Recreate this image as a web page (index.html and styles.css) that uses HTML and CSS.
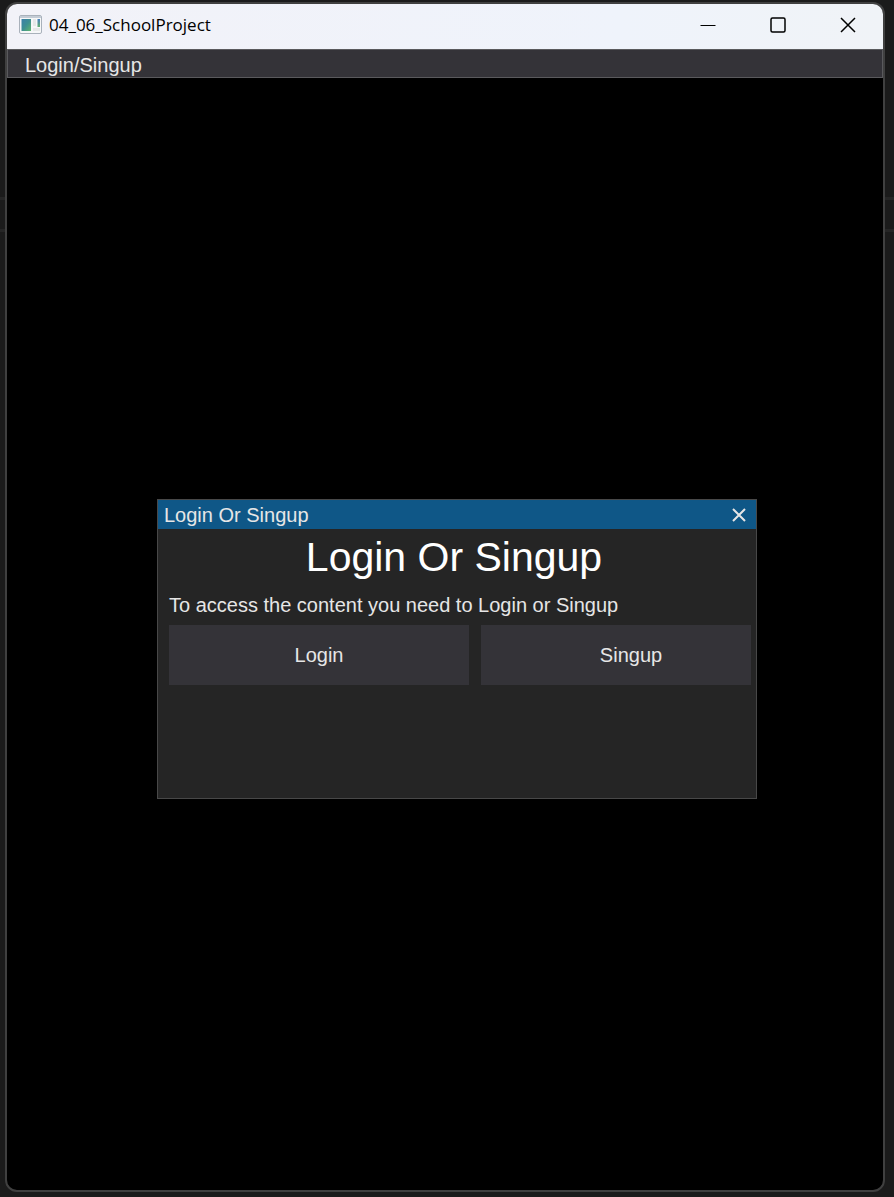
FILE: index.html
```html
<!DOCTYPE html>
<html lang="en">
<head>
<meta charset="utf-8">
<title>04_06_SchoolProject</title>
<link rel="stylesheet" href="styles.css">
</head>
<body>
<main class="window">
  <header class="titlebar">
    <svg class="app-icon" width="24" height="21" viewBox="0 0 24 21" aria-hidden="true">
      <defs>
        <linearGradient id="pane" x1="0" y1="0" x2="1" y2="1">
          <stop offset="0" stop-color="#3b7fa9"/><stop offset="0.5" stop-color="#3d8f92"/><stop offset="1" stop-color="#61b56c"/>
        </linearGradient>
        <linearGradient id="strip" x1="0" y1="0" x2="0" y2="1">
          <stop offset="0" stop-color="#4a7ec0"/><stop offset="1" stop-color="#62b070"/>
        </linearGradient>
      </defs>
      <rect x="0.500" y="0.500" width="22" height="18" rx="1.500" fill="#f6f7f8" stroke="#a9b1bb"/>
      <path d="M1 2H22" stroke="#c3cbd5" stroke-width="2"/>
      <rect x="2.500" y="4" width="9.500" height="12" fill="url(#pane)"/>
      <path d="M14 4h3v7h-3zM14 13h7v3h-7z" fill="#e6e8e8"/>
      <rect x="18.500" y="4" width="2.500" height="8" fill="url(#strip)"/>
    </svg>
    <h1 class="app-name">04_06_SchoolProject</h1>
    <div class="controls">
      <button class="control" type="button" aria-label="Minimize">
        <svg width="16" height="16" viewBox="0 0 16 16"><path d="M0.500 8.500h15"/></svg>
      </button>
      <button class="control" type="button" aria-label="Maximize">
        <svg width="16" height="16" viewBox="0 0 16 16"><rect x="1" y="1" width="14" height="14" rx="1.500" stroke-width="1.500"/></svg>
      </button>
      <button class="control" type="button" aria-label="Close">
        <svg width="16" height="16" viewBox="0 0 16 16"><path d="M1 1l14 14M15 1L1 15" stroke-width="1.500"/></svg>
      </button>
    </div>
  </header>
  <nav class="menubar">
    <button class="menu-item" type="button">Login/Singup</button>
  </nav>
  <section class="dialog" role="dialog" aria-labelledby="dialog-title">
    <div class="dialog-bar">
      <span id="dialog-title">Login Or Singup</span>
      <button class="dialog-close" type="button" aria-label="Close dialog">
        <svg width="14" height="14" viewBox="0 0 14 14"><path d="M1 1l12 12M13 1L1 13"/></svg>
      </button>
    </div>
    <div class="dialog-body">
      <h2 class="heading">Login Or Singup</h2>
      <p class="message">To access the content you need to Login or Singup</p>
      <div class="actions">
        <button class="action" type="button">Login</button>
        <button class="action" type="button">Singup</button>
      </div>
    </div>
  </section>
</main>
</body>
</html>
```
FILE: styles.css
```css
* {
  box-sizing: border-box;
}

body {
  margin: 0;
  min-height: 100vh;
  display: flex;
  padding: 2px 9px 5px 5px;
  color: #e6e6e6;
  background:
    linear-gradient(#262626, #262626) 0 197px / 100% 3px no-repeat,
    linear-gradient(#262626, #262626) 0 229px / 100% 3px no-repeat,
    #1b1b1b;
  font: 20px/24px "Liberation Sans", Arial, sans-serif;
}

button {
  margin: 0;
  padding: 0;
  border: 0;
  background: none;
  color: inherit;
  font: inherit;
}

svg {
  display: block;
  fill: none;
  stroke-width: 1;
}

.window {
  position: relative;
  flex: 1;
  display: flex;
  flex-direction: column;
  border: 2px solid #404040;
  border-radius: 12px;
  background: #000;
  overflow: hidden;
}

.titlebar {
  display: flex;
  align-items: center;
  height: 45px;
  padding: 0 0 3px 12px;
  background: linear-gradient(90deg, #f2f2f8, #eff3fb 70%, #f0f3f7);
  color: #000;
}

.app-name {
  flex: 1;
  margin: 0 0 0 6px;
  font: 400 17px/24px "Open Sans", "Noto Sans", sans-serif;
}

.controls {
  display: flex;
}

.control {
  display: grid;
  place-items: center;
  width: 70px;
  height: 42px;
  stroke: #000;
}

.menubar {
  display: flex;
  height: 29px;
  padding: 0 17px;
  border: 1px solid #5a5a5d;
  background: #343338;
}

.menu-item {
  padding-top: 2px;
}

.dialog {
  position: absolute;
  top: 495px;
  left: 150px;
  width: 600px;
  height: 300px;
  border: 1px solid #484848;
  background: #252525;
}

.dialog-bar {
  display: flex;
  justify-content: space-between;
  align-items: center;
  height: 29px;
  padding: 0 10px 0 6px;
  background: #0f5787;
}

.dialog-close {
  stroke: #e6e6e6;
}

.dialog-close svg {
  stroke-width: 2;
}

.dialog-body {
  padding: 4px 5px 0 11px;
}

.heading {
  margin: 0;
  padding-right: 12px;
  color: #fff;
  font-size: 41px;
  font-weight: 400;
  line-height: 48px;
  text-align: center;
}

.message {
  margin: 12px 0 8px;
}

.actions {
  display: flex;
  gap: 12px;
  overflow: hidden;
}

.action {
  flex: 0 0 300px;
  height: 60px;
  background: #343338;
}
```
